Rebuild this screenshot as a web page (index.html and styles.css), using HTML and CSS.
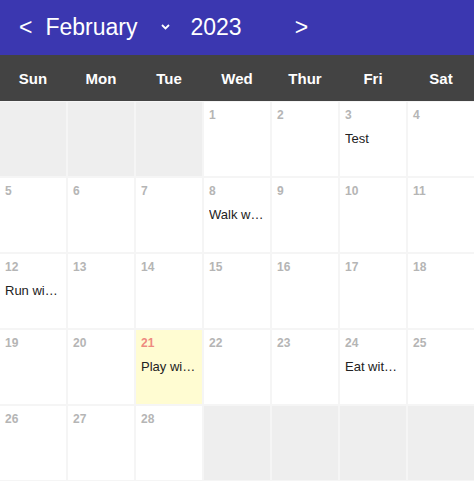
FILE: index.html
```html
<!DOCTYPE html>
<html>
<head>
<meta charset="utf-8">
<link rel="stylesheet" href="styles.css">
</head>
<body>
<div class="calendar">
  <div class="topbar">
    <span class="nav prev">&lt;</span>
    <span class="month">February</span>
    <svg class="chev" width="9" height="6" viewBox="0 0 9 6"><polyline points="1,1 4.5,4.5 8,1" fill="none" stroke="#fff" stroke-width="1.8"/></svg>
    <span class="year">2023</span>
    <span class="nav next">&gt;</span>
  </div>
  <div class="weekdays">
    <div>Sun</div><div>Mon</div><div>Tue</div><div>Wed</div><div>Thur</div><div>Fri</div><div>Sat</div>
  </div>
  <div class="grid">
    <div class="cell off"></div>
    <div class="cell off"></div>
    <div class="cell off"></div>
    <div class="cell"><div class="num">1</div></div>
    <div class="cell"><div class="num">2</div></div>
    <div class="cell"><div class="num">3</div><div class="ev">Test</div></div>
    <div class="cell"><div class="num">4</div></div>

    <div class="cell"><div class="num">5</div></div>
    <div class="cell"><div class="num">6</div></div>
    <div class="cell"><div class="num">7</div></div>
    <div class="cell"><div class="num">8</div><div class="ev">Walk with dog</div></div>
    <div class="cell"><div class="num">9</div></div>
    <div class="cell"><div class="num">10</div></div>
    <div class="cell"><div class="num">11</div></div>

    <div class="cell"><div class="num">12</div><div class="ev">Run with friends</div></div>
    <div class="cell"><div class="num">13</div></div>
    <div class="cell"><div class="num">14</div></div>
    <div class="cell"><div class="num">15</div></div>
    <div class="cell"><div class="num">16</div></div>
    <div class="cell"><div class="num">17</div></div>
    <div class="cell"><div class="num">18</div></div>

    <div class="cell"><div class="num">19</div></div>
    <div class="cell"><div class="num">20</div></div>
    <div class="cell today"><div class="num">21</div><div class="ev">Play with cat</div></div>
    <div class="cell"><div class="num">22</div></div>
    <div class="cell"><div class="num">23</div></div>
    <div class="cell"><div class="num">24</div><div class="ev">Eat with family</div></div>
    <div class="cell"><div class="num">25</div></div>

    <div class="cell"><div class="num">26</div></div>
    <div class="cell"><div class="num">27</div></div>
    <div class="cell"><div class="num">28</div></div>
    <div class="cell off"></div>
    <div class="cell off"></div>
    <div class="cell off"></div>
    <div class="cell off"></div>
  </div>
</div>
</body>
</html>
```
FILE: styles.css
```css
html, body {
  margin: 0;
  padding: 0;
  background: #ffffff;
}
body {
  font-family: "Liberation Sans", Arial, sans-serif;
}
.calendar {
  width: 474px;
}
.topbar {
  height: 55px;
  background: #3b37b0;
  color: #ffffff;
  display: flex;
  align-items: center;
  padding-left: 19px;
  font-size: 23px;
}
.prev {
  margin-right: 13px;
}
.chev {
  margin-left: 24px;
  margin-top: -2px;
}
.year {
  margin-left: 20px;
}
.next {
  margin-left: 53px;
}
.weekdays {
  height: 46px;
  background: #434343;
  color: #ffffff;
  display: grid;
  grid-template-columns: repeat(7, 1fr);
  column-gap: 2px;
  align-items: center;
  text-align: center;
  font-weight: bold;
  font-size: 15px;
}
.grid {
  display: grid;
  grid-template-columns: repeat(7, 1fr);
  grid-auto-rows: 74px;
  gap: 2px;
  padding: 1px 0;
  background: #f5f5f5;
}
.cell {
  background: #ffffff;
  padding: 6px 5px 0 5px;
  min-width: 0;
}
.cell.off {
  background: #eeeeee;
}
.cell.today {
  background: #fffcd2;
}
.num {
  font-size: 12px;
  line-height: 14px;
  font-weight: bold;
  color: #b5b5b5;
}
.today .num {
  color: #ee8a80;
}
.ev {
  margin-top: 8px;
  font-size: 13px;
  line-height: 18px;
  color: #222222;
  white-space: nowrap;
  overflow: hidden;
  text-overflow: ellipsis;
}
```
